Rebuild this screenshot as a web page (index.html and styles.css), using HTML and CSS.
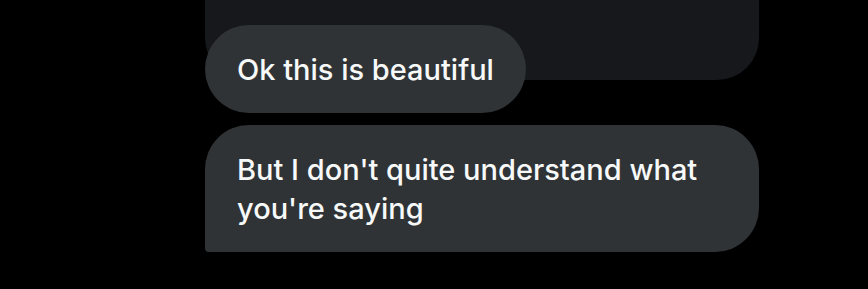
FILE: index.html
```html
<!DOCTYPE html>
<html>
<head>
<meta charset="utf-8">
<link rel="stylesheet" href="styles.css">
</head>
<body>
<div class="thread">
  <div class="card"></div>
  <div class="bubble pill">Ok this is beautiful</div>
  <div class="bubble last">But I don't quite understand what you're saying</div>
</div>
</body>
</html>
```
FILE: styles.css
```css
html, body {
  margin: 0;
  padding: 0;
  background: #000;
}
body {
  width: 868px;
  height: 289px;
  overflow: hidden;
  font-family: Inter, "Noto Sans", sans-serif;
}
.thread {
  margin-left: 205px;
  width: 554px;
  display: flex;
  flex-direction: column;
  align-items: flex-start;
}
.card {
  width: 554px;
  height: 80px;
  background: #16181c;
  border-radius: 0 0 42px 42px;
}
.bubble {
  background: #2f3336;
  color: #f7f9f9;
  font-size: 29px;
  font-weight: 500;
  line-height: 39px;
  padding: 24.5px 32px 24px;
  box-sizing: border-box;
}
.pill {
  margin-top: -55px;
  border-radius: 44px;
}
.last {
  margin-top: 12.5px;
  width: 554px;
  border-radius: 44px 44px 44px 4px;
}
```
